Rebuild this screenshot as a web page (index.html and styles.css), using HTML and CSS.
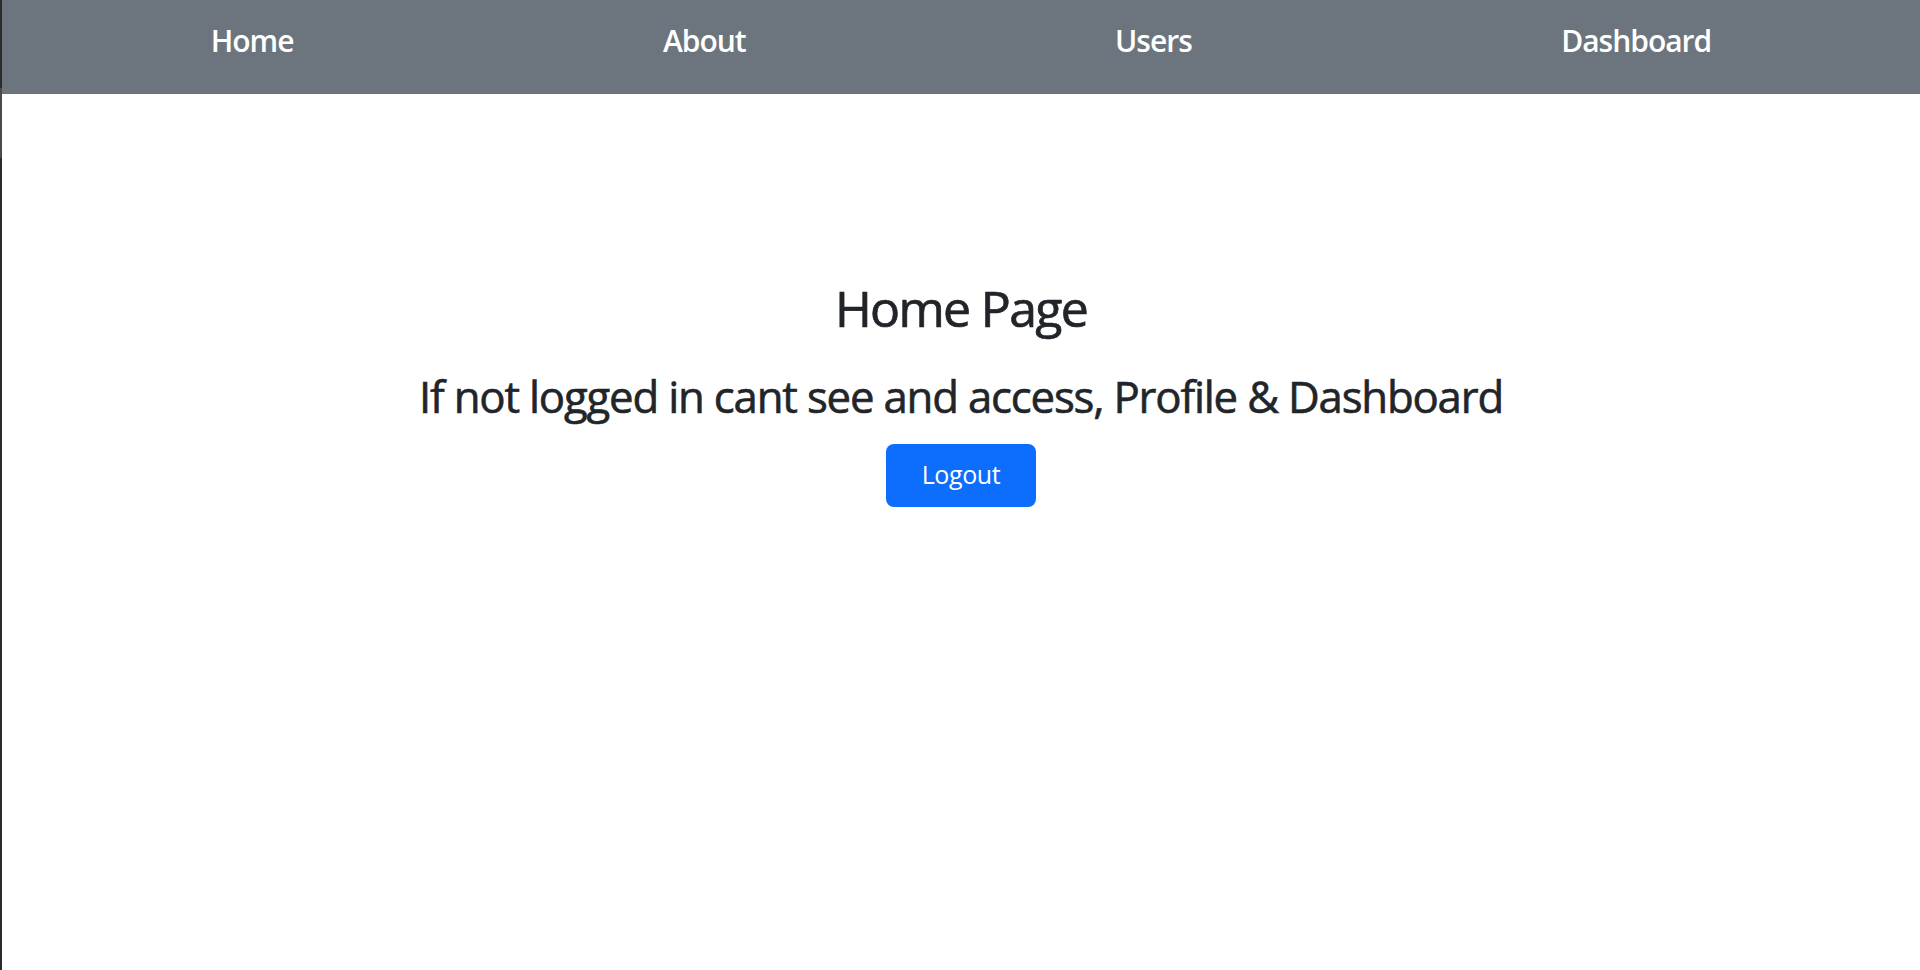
FILE: index.html
```html
<!DOCTYPE html>
<html lang="en">
<head>
<meta charset="utf-8">
<title>Home Page</title>
<link rel="stylesheet" href="styles.css">
</head>
<body>
<nav class="topbar">
  <a class="navlink" href="#">Home</a>
  <a class="navlink" href="#">About</a>
  <a class="navlink" href="#">Users</a>
  <a class="navlink" href="#">Dashboard</a>
</nav>
<main class="content">
  <h1 class="title">Home Page</h1>
  <h2 class="subtitle">If not logged in cant see and access, Profile &amp; Dashboard</h2>
  <button class="btn-logout" type="button">Logout</button>
</main>
</body>
</html>
```
FILE: styles.css
```css
html, body {
  margin: 0;
  height: 100%;
}
body {
  padding-left: 2px;
  box-sizing: border-box;
  background:
    linear-gradient(to bottom, #2b2b2b 0, #2b2b2b 88px, #4a4a4a 88px, #4a4a4a 158px, #2b2b2b 158px) left top / 2px 100% no-repeat,
    #ffffff;
  font-family: "Open Sans", "Noto Sans", sans-serif;
  color: #212529;
}
.topbar {
  height: 94px;
  background: #6c757d;
  display: flex;
  justify-content: space-around;
  align-items: center;
  padding: 0 24px 13px;
  box-sizing: border-box;
}
.navlink {
  color: #ffffff;
  text-decoration: none;
  font-size: 30px;
  font-weight: 600;
  line-height: 1.5;
  letter-spacing: -1px;
}
.content {
  text-align: center;
  padding-top: 184px;
}
.title {
  margin: 0 0 32px;
  font-size: 50px;
  font-weight: 500;
  line-height: 1.2;
  letter-spacing: -1.7px;
  -webkit-text-stroke: 0.7px #212529;
}
.subtitle {
  margin: 0 0 21px;
  font-size: 43.75px;
  font-weight: 500;
  line-height: 1.2;
  letter-spacing: -1.2px;
  -webkit-text-stroke: 0.6px #212529;
}
.btn-logout {
  font-family: inherit;
  font-size: 25px;
  line-height: 37.5px;
  padding: 12.75px 36px;
  border: 0;
  border-radius: 8px;
  background: #0d6efd;
  color: #ffffff;
  letter-spacing: -0.4px;
  cursor: pointer;
}
```
